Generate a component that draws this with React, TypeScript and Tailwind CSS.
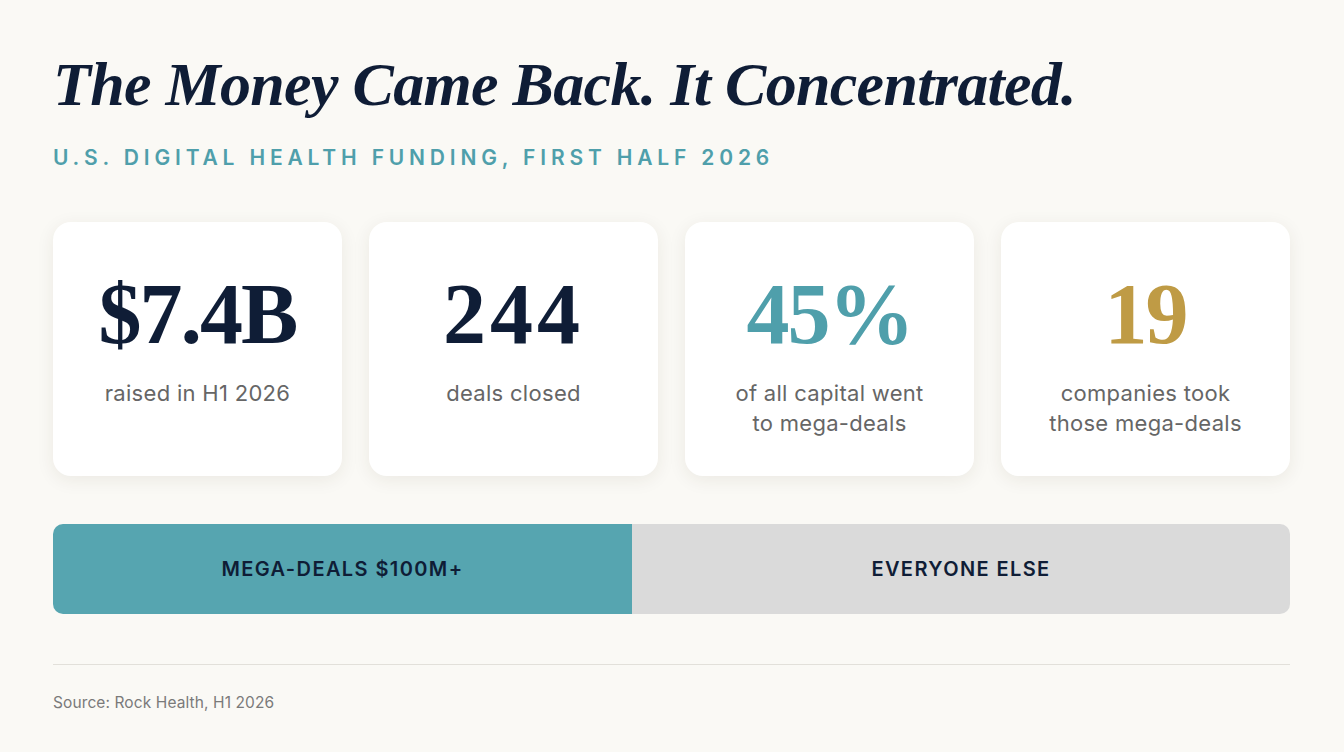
const stats = [
  { value: "$7.4B", color: "text-[#0f1d36]", label: ["raised in H1 2026"] },
  { value: "244", color: "text-[#0f1d36]", label: ["deals closed"] },
  { value: "45%", color: "text-[#4f9fab]", label: ["of all capital went", "to mega-deals"] },
  { value: "19", color: "text-[#bf9b45]", label: ["companies took", "those mega-deals"] },
]

export default function App() {
  return (
    <div className="min-h-screen w-full bg-[#faf9f5] px-[53px] pt-[48px] font-['Inter','Liberation_Sans',sans-serif]">
      {/* Heading */}
      <h1 className="font-['Liberation_Serif',serif] text-[62px] font-bold italic leading-[72px] tracking-[-0.7px] text-[#0f1d36]">
        The Money Came Back. It Concentrated.
      </h1>
      <p className="mt-[24px] text-[21px] font-semibold uppercase leading-[28px] tracking-[0.23em] text-[#4f9fab]">
        U.S. Digital Health Funding, First Half 2026
      </p>

      {/* Stat cards */}
      <div className="mt-[50px] grid w-[1237px] grid-cols-4 gap-[27px]">
        {stats.map((s) => (
          <div
            key={s.value}
            className="flex h-[254px] flex-col items-center rounded-[18px] bg-white pt-[47px] shadow-[0_4px_18px_rgba(60,50,30,0.08)]"
          >
            <div
              className={`font-['Liberation_Serif',serif] text-[86px] font-bold leading-[90px] ${
                s.value === "244" ? "tracking-[4px]" : "tracking-[-2px]"
              } ${s.color}`}
            >
              {s.value}
            </div>
            <div className="mt-[19px] text-center text-[22px] leading-[30px] tracking-[0.3px] text-[#666666]">
              {s.label.map((l) => (
                <div key={l}>{l}</div>
              ))}
            </div>
          </div>
        ))}
      </div>

      {/* Split bar */}
      <div className="mt-[48px] flex h-[90px] w-[1237px] overflow-hidden rounded-[10px]">
        <div className="flex w-[579px] items-center justify-center bg-[#56a5b0] text-[20px] font-semibold tracking-[0.07em] text-[#0f1d36]">
          MEGA-DEALS $100M+
        </div>
        <div className="flex flex-1 items-center justify-center bg-[#dadada] text-[20px] font-semibold tracking-[0.07em] text-[#0f1d36]">
          EVERYONE ELSE
        </div>
      </div>

      {/* Footer */}
      <div className="mt-[50px] h-px w-[1237px] bg-[#e2e0da]" />
      <p className="mt-[26px] text-[15.5px] tracking-[0.1px] text-[#7a7a7a]">Source: Rock Health, H1 2026</p>
    </div>
  )
}
